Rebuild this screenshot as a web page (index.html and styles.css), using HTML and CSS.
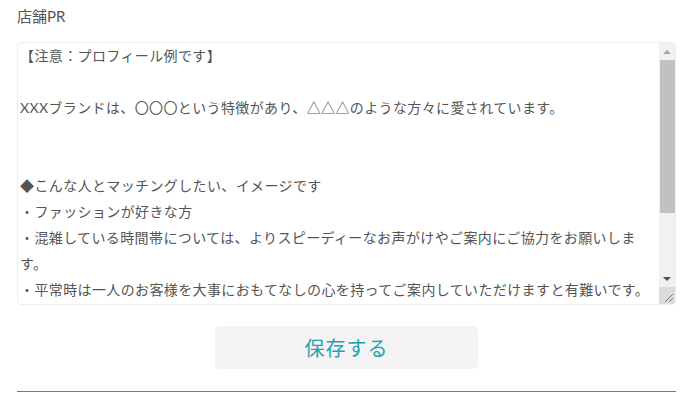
FILE: index.html
```html
<!DOCTYPE html>
<html lang="ja">
<head>
<meta charset="utf-8">
<link rel="stylesheet" href="styles.css">
</head>
<body>
<div class="page">
  <div class="label">店舗PR</div>
  <div class="field">
    <textarea class="pr">【注意：プロフィール例です】

XXXブランドは、〇〇〇という特徴があり、△△△のような方々に愛されています。


◆こんな人とマッチングしたい、イメージです
・ファッションが好きな方
・混雑している時間帯については、よりスピーディーなお声がけやご案内にご協力をお願いします。
・平常時は一人のお客様を大事におもてなしの心を持ってご案内していただけますと有難いです。
・明るく元気な接客ができる方
・お客様の立場に立って考えられる方
・チームワークを大切にできる方
・長期で働ける方を歓迎します。</textarea>
    <div class="scrollbar" aria-hidden="true">
      <div class="sb-btn"><span class="arrow-up"></span></div>
      <div class="sb-track"><div class="sb-thumb"></div></div>
      <div class="sb-btn"><span class="arrow-down"></span></div>
      <div class="sb-corner">
        <svg width="16" height="17" viewBox="0 0 16 17">
          <line x1="6" y1="15" x2="14" y2="7" stroke="#777" stroke-width="1"/>
          <line x1="10" y1="15" x2="14" y2="11" stroke="#777" stroke-width="1"/>
        </svg>
      </div>
    </div>
  </div>
  <div class="actions">
    <button class="save" type="button">保存する</button>
  </div>
  <hr class="rule">
</div>
</body>
</html>
```
FILE: styles.css
```css
html, body {
  margin: 0;
  padding: 0;
  background: #fff;
}
body {
  font-family: "Lato", "Noto Sans CJK JP", sans-serif;
  color: #555;
}
.page {
  padding: 5px 12px 0 17px;
}
.label {
  font-size: 15px;
  line-height: 22px;
  color: #555;
}
.field {
  display: flex;
  box-sizing: border-box;
  width: 659px;
  height: 263px;
  margin-top: 15px;
  border: 1px solid #eeeeee;
  border-radius: 4px;
  overflow: hidden;
  background: #fff;
}
.pr {
  flex: 1;
  min-width: 0;
  box-sizing: border-box;
  height: 100%;
  margin: 0;
  padding: 0 2px 2px 2px;
  border: none;
  font-family: "Lato", "Noto Sans CJK JP", sans-serif;
  font-size: 14px;
  line-height: 26px;
  letter-spacing: 0.38px;
  color: #555;
  resize: none;
  outline: none;
  overflow: hidden;
  background: transparent;
}
.scrollbar {
  display: flex;
  flex-direction: column;
  width: 16px;
  flex: none;
  background: #f1f1f1;
}
.sb-btn {
  height: 17px;
  display: flex;
  align-items: center;
  justify-content: center;
  flex: none;
}
.arrow-up {
  width: 0;
  height: 0;
  border-left: 4px solid transparent;
  border-right: 4px solid transparent;
  border-bottom: 4px solid #a3a3a3;
}
.arrow-down {
  width: 0;
  height: 0;
  border-left: 4px solid transparent;
  border-right: 4px solid transparent;
  border-top: 4px solid #505050;
}
.sb-track {
  flex: 1;
  padding-left: 1px;
}
.sb-thumb {
  height: 153px;
  background: #c1c1c1;
}
.sb-corner {
  height: 17px;
  flex: none;
  background: #dcdcdc;
}
.sb-corner svg {
  display: block;
}
.actions {
  display: flex;
  justify-content: center;
  padding-top: 21px;
}
.save {
  width: 263px;
  height: 43px;
  border: none;
  border-radius: 5px;
  background: #f4f4f4;
  color: #1ea2b4;
  font-family: "Noto Sans CJK JP", sans-serif;
  font-size: 20px;
  letter-spacing: 1px;
  cursor: pointer;
}
.rule {
  margin: 22px 0 0;
  width: 659px;
  border: none;
  border-top: 1px solid #777;
}
```
